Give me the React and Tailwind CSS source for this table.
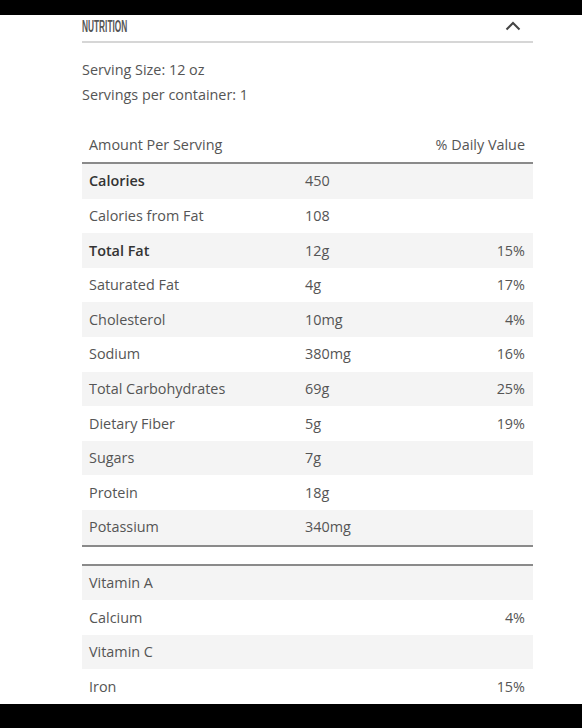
const facts = [
  { label: "Calories", value: "450", dv: "", bold: true },
  { label: "Calories from Fat", value: "108", dv: "" },
  { label: "Total Fat", value: "12g", dv: "15%", bold: true },
  { label: "Saturated Fat", value: "4g", dv: "17%" },
  { label: "Cholesterol", value: "10mg", dv: "4%" },
  { label: "Sodium", value: "380mg", dv: "16%" },
  { label: "Total Carbohydrates", value: "69g", dv: "25%" },
  { label: "Dietary Fiber", value: "5g", dv: "19%" },
  { label: "Sugars", value: "7g", dv: "" },
  { label: "Protein", value: "18g", dv: "" },
  { label: "Potassium", value: "340mg", dv: "" },
];

const vitamins = [
  { label: "Vitamin A", dv: "" },
  { label: "Calcium", dv: "4%" },
  { label: "Vitamin C", dv: "" },
  { label: "Iron", dv: "15%" },
];

const Row = ({ item, index }) => (
  <div
    className={`flex items-center h-[34.6px] px-[7px] ${
      index % 2 === 0 ? "bg-[#f4f4f4]" : "bg-white"
    }`}
  >
    <div
      className={`w-[216px] ${
        item.bold ? "font-semibold text-[#333]" : "text-[#555]"
      }`}
    >
      {item.label}
    </div>
    <div className="flex-1 text-[#555]">{item.value}</div>
    <div className="w-[80px] text-right pr-px text-[#555]">{item.dv}</div>
  </div>
);

const App = () => {
  return (
    <div className="bg-white min-h-[728px] flex flex-col font-['Open_Sans',sans-serif] text-[14.4px]">
      <div className="h-[15px] bg-black" />
      <div className="ml-[82px] w-[451px] flex-1">
        <div className="flex items-center justify-between h-[28px] border-b-2 border-[#d6d6d6]">
          <span className="inline-block origin-left scale-x-[0.52] font-['Liberation_Sans_Narrow','Liberation_Sans',sans-serif] font-bold text-[16px] text-[#555] mt-[-3px]">
            NUTRITION
          </span>
          <svg
            width="16"
            height="10"
            viewBox="0 0 16 10"
            className="mr-[12px] mt-[-4px]"
          >
            <polyline
              points="1.5,8.5 8,2 14.5,8.5"
              fill="none"
              stroke="#444"
              strokeWidth="2"
            />
          </svg>
        </div>

        <div className="mt-[14px] text-[#555] leading-[25px]">
          <div>Serving Size: 12 oz</div>
          <div>Servings per container: 1</div>
        </div>

        <div className="mt-[21px] flex items-center justify-between px-[7px] h-[36px] border-b-2 border-[#8a8a8a] text-[#555]">
          <span>Amount Per Serving</span>
          <span className="pr-px">% Daily Value</span>
        </div>

        <div className="border-b-2 border-[#8a8a8a]">
          {facts.map((item, index) => (
            <Row key={item.label} item={item} index={index} />
          ))}
        </div>

        <div className="mt-[17px] border-t-2 border-[#8a8a8a]">
          {vitamins.map((item, index) => (
            <Row key={item.label} item={item} index={index} />
          ))}
        </div>
      </div>
      <div className="h-[27px] bg-black" />
    </div>
  );
};

export default App;
